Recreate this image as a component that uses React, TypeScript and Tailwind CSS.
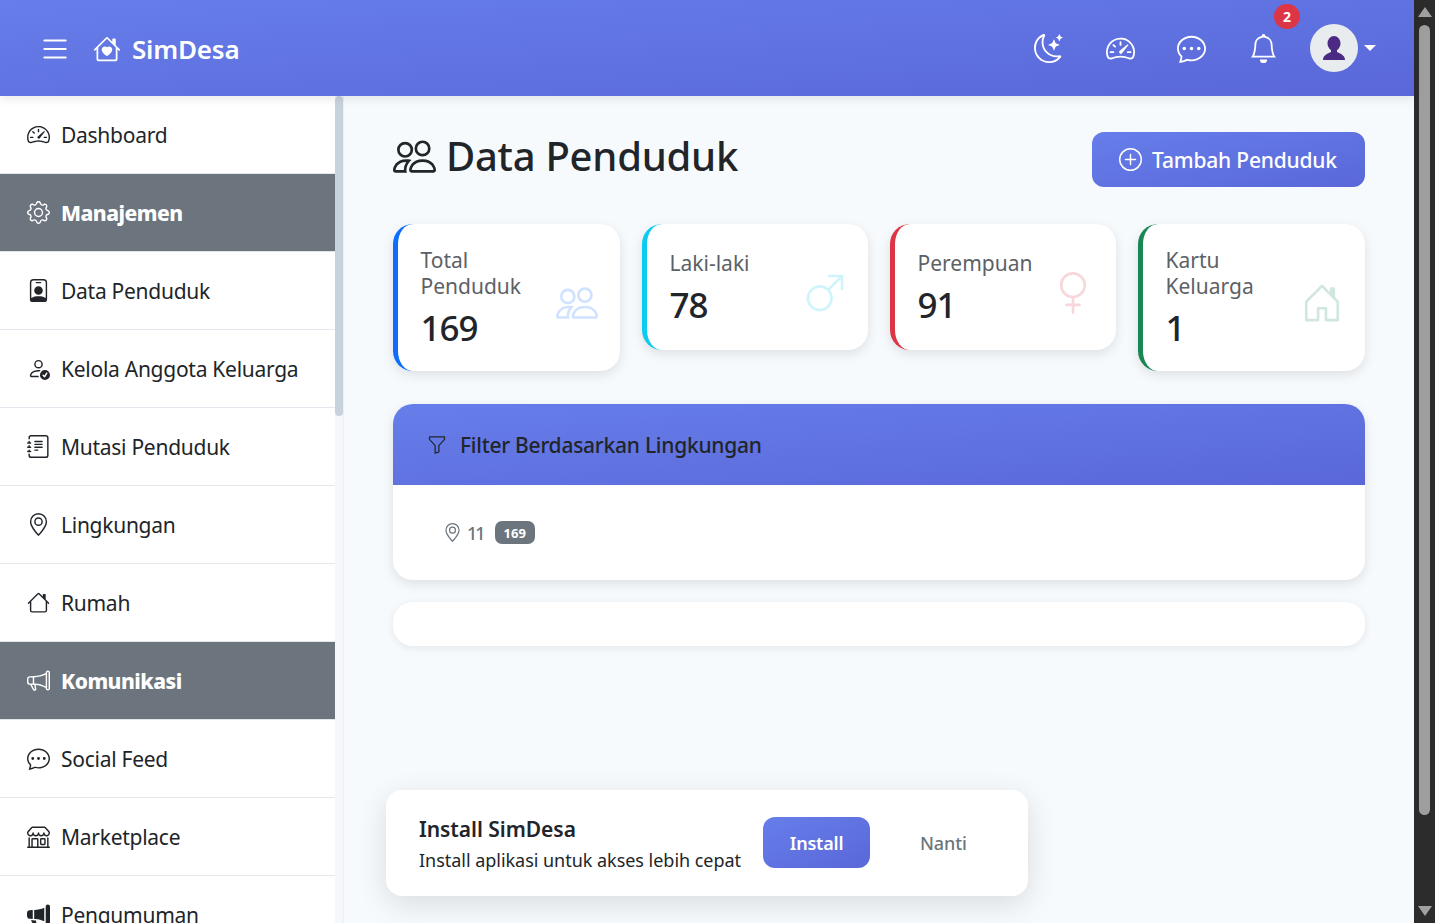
import React from 'react'
import {
  BsBell, BsChatDots, BsFunnel, BsGear, BsGenderFemale, BsGenderMale, BsGeoAlt, BsHouse, BsHouseDoor, BsHouseHeart,
  BsJournalText, BsList, BsMegaphone, BsMegaphoneFill, BsMoonStars, BsPeople, BsPersonBadge, BsPersonCheck,
  BsPlusCircle, BsShop, BsSpeedometer2,
} from 'react-icons/bs'

const menu = [
  { label: 'Dashboard', icon: BsSpeedometer2 },
  { label: 'Manajemen', icon: BsGear, head: true },
  { label: 'Data Penduduk', icon: BsPersonBadge },
  { label: 'Kelola Anggota Keluarga', icon: BsPersonCheck },
  { label: 'Mutasi Penduduk', icon: BsJournalText },
  { label: 'Lingkungan', icon: BsGeoAlt },
  { label: 'Rumah', icon: BsHouse },
  { label: 'Komunikasi', icon: BsMegaphone, head: true },
  { label: 'Social Feed', icon: BsChatDots },
  { label: 'Marketplace', icon: BsShop },
  { label: 'Pengumuman', icon: BsMegaphoneFill },
]

function StatCard({ title, value, icon: Icon, border, iconColor }: { title: string[]; value: string; icon: any; border: string; iconColor: string }) {
  // kartu dengan judul dua baris lebih tinggi
  const double = title.length > 1
  return (
    <div className={`flex items-center justify-between rounded-[20px] border-l-[5px] bg-white pl-[22.5px] pr-[22px] shadow-[0_4px_12px_rgba(0,0,0,0.1)] ${double ? 'h-[147px]' : 'h-[126px]'} ${border}`}>
      <div className={`self-start ${double ? 'pt-[23px]' : 'pt-[26px]'}`}>
        <div className="text-[21px] leading-[26px] text-[#5c6166]">
          {title.map((t) => <div key={t}>{t}</div>)}
        </div>
        <div className="mt-[3px] text-[35px] leading-[52px] font-medium tracking-[-1px] text-[#212529]">{value}</div>
      </div>
      <Icon className={`mt-[11px] h-[42px] w-[42px] shrink-0 ${iconColor}`} />
    </div>
  )
}

export default function App() {
  return (
    <div className="flex h-screen w-full overflow-hidden bg-[#f7fafd] font-['Noto_Sans',sans-serif] text-[#212529]">
      <div className="relative flex min-w-0 flex-1 flex-col">
        {/* Navbar */}
        <header className="relative z-10 flex h-[96px] shrink-0 items-center justify-between bg-linear-to-br from-[#667eea] to-[#5a67d8] pl-[38px] pr-[38px] text-white shadow-[0_2px_10px_rgba(0,0,0,0.1)]">
          <div className="flex items-center pt-[2px]">
            <BsList className="h-[34px] w-[34px]" />
            <BsHouseHeart className="ml-[21px] h-[28px] w-[28px]" />
            <span className="ml-[11px] text-[26px] font-semibold tracking-[-0.2px]">SimDesa</span>
          </div>
          <div className="flex items-center">
            <BsMoonStars className="h-[29px] w-[29px]" />
            <BsSpeedometer2 className="ml-[43px] h-[29px] w-[29px]" />
            <BsChatDots className="ml-[42px] h-[29px] w-[29px]" />
            <div className="relative ml-[43px]">
              <BsBell className="h-[29px] w-[29px]" />
              <span className="absolute left-[25px] top-[-30px] flex h-[25px] w-[26px] items-center justify-center rounded-full bg-[#dc3545] text-[14px] font-bold">2</span>
            </div>
            <div className="ml-[32px] flex h-[48px] w-[48px] items-center justify-center rounded-full bg-[#e9ecef]">
              <svg viewBox="0 0 22 24" className="h-[24px] w-[22px]">
                <ellipse cx="11" cy="7.500" rx="6.500" ry="7.500" fill="#4a2a82" />
                <path fill="#4a2a82" d="M0 24C0 19 5 17.500 8 16V12H14V16C17 17.500 22 19 22 24Z" />
              </svg>
            </div>
            <span className="ml-[6px] h-0 w-0 border-x-[6px] border-t-[6px] border-x-transparent border-t-white" />
          </div>
        </header>

        <div className="flex min-h-0 flex-1">
          {/* Sidebar */}
          <aside className="flex w-[344px] shrink-0 border-r border-[#eceff3] bg-[#f5f7fa]">
            <nav className="h-full w-[335px] overflow-hidden bg-white">
              {menu.map(({ label, icon: Icon, head }) => (
                <div
                  key={label}
                  className={`flex h-[78px] items-center border-b pl-[27px] ${head ? 'border-[#e4e7ea] bg-[#6c757d] font-extrabold text-white' : 'border-[#e4e7ee] text-[#212529]'}`}
                >
                  <Icon className="h-[23px] w-[23px] shrink-0" />
                  <span className={`ml-[11px] pt-[2px] text-[21px] ${head ? 'tracking-[-0.5px]' : 'tracking-[-0.27px]'}`}>{label}</span>
                </div>
              ))}
            </nav>
            <div className="w-[8px]">
              <div className="h-[320px] rounded-[4px] bg-[#c8d2dd]" />
            </div>
          </aside>

          {/* Main */}
          <main className="relative min-w-0 flex-1 pl-[49px] pr-[49px] pt-[36px]">
            <div className="flex items-start justify-between">
              <h1 className="flex items-center text-[40px] leading-[48px] font-medium tracking-[-0.25px]">
                <BsPeople className="mr-[10px] h-[43px] w-[43px]" />
                Data Penduduk
              </h1>
              <button className="flex h-[55px] w-[273px] items-center rounded-[12px] bg-linear-to-br from-[#667eea] to-[#5a67d8] pl-[27px] text-[21px] font-medium tracking-[-0.2px] text-white">
                <BsPlusCircle className="mr-[10px] h-[23px] w-[23px]" />
                <span className="pt-[2px]">Tambah Penduduk</span>
              </button>
            </div>

            <div className="mt-[37px] grid grid-cols-[227px_226px_226px_227px] items-start gap-[22px]">
              <StatCard title={['Total', 'Penduduk']} value="169" icon={BsPeople} border="border-[#0d6efd]" iconColor="text-[#cfe2ff]" />
              <StatCard title={['Laki-laki']} value="78" icon={BsGenderMale} border="border-[#0dcaf0]" iconColor="text-[#cff4fc]" />
              <StatCard title={['Perempuan']} value="91" icon={BsGenderFemale} border="border-[#dc3545]" iconColor="text-[#f8d7da]" />
              <StatCard title={['Kartu', 'Keluarga']} value="1" icon={BsHouseDoor} border="border-[#198754]" iconColor="text-[#d1e7dd]" />
            </div>

            <section className="mt-[33px] overflow-hidden rounded-[20px] bg-white shadow-[0_4px_12px_rgba(0,0,0,0.1)]">
              <div className="flex h-[81px] items-center bg-linear-to-br from-[#667eea] to-[#5a67d8] pl-[34px] text-[21px] font-medium tracking-[-0.25px]">
                <BsFunnel className="mr-[13px] h-[20px] w-[20px]" />
                <span className="pt-[3px]">Filter Berdasarkan Lingkungan</span>
              </div>
              <div className="flex h-[95px] items-center pl-[50px] text-[#6c757d]">
                <BsGeoAlt className="h-[19px] w-[19px]" />
                <span className="ml-[5px] pt-[1px] text-[18px] font-medium tracking-[-2px]">11</span>
                <span className="ml-[11px] rounded-[7px] bg-[#6c757d] px-[9px] pb-[2px] pt-[4px] text-[13px] leading-[17px] font-bold text-white">169</span>
              </div>
            </section>

            <section className="mt-[22px] h-[44px] rounded-[20px] bg-white shadow-[0_2px_8px_rgba(0,0,0,0.08)]" />

            {/* Install prompt */}
            <div className="absolute bottom-[27px] left-[42px] flex h-[106px] w-[642px] items-center rounded-[16px] bg-white pl-[33px] shadow-[0_8px_30px_rgba(0,0,0,0.12)]">
              <div className="w-[344px] pt-[2px]">
                <div className="text-[21px] leading-[30px] font-semibold tracking-[-0.05px]">Install SimDesa</div>
                <div className="mt-[2px] text-[18px] leading-[28px] tracking-[-0.03px]">Install aplikasi untuk akses lebih cepat</div>
              </div>
              <button className="mb-[1px] flex h-[51px] w-[107px] items-center justify-center rounded-[12px] bg-linear-to-br from-[#667eea] to-[#5a67d8] pt-[2px] text-[18px] font-semibold tracking-[-0.2px] text-white">Install</button>
              <button className="ml-[50px] text-[18px] font-medium tracking-[-0.1px] text-[#6c757d]">Nanti</button>
            </div>
          </main>
        </div>
      </div>

      {/* Window scrollbar */}
      <div className="flex h-full w-[21px] shrink-0 flex-col items-center bg-[#2c2c2c] py-[7px]">
        <span className="h-0 w-0 border-x-[7px] border-b-[10px] border-x-transparent border-b-[#a0a0a0]" />
        <div className="mt-[8px] h-[790px] w-[11px] rounded-full bg-[#9e9e9e]" />
        <div className="flex-1" />
        <span className="h-0 w-0 border-x-[7px] border-t-[10px] border-x-transparent border-t-[#a0a0a0]" />
      </div>
    </div>
  )
}
